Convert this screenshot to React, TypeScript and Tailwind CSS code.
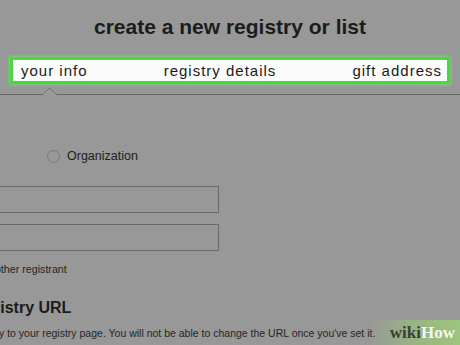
const font = { fontFamily: '"Liberation Sans", Arial, sans-serif' };

function Caret(): JSX.Element {
  return (
    <svg
      width="16"
      height="9"
      viewBox="0 0 16 9"
      className="absolute left-[42px] top-[-7px]"
    >
      <polyline points="0.5,8 7.5,1 14.5,8" fill="#989898" stroke="#6e6e6e" strokeWidth="1" />
      <polyline points="2,8 7.5,2.5 13,8" fill="none" stroke="#a9a9a9" strokeWidth="0.8" />
    </svg>
  );
}

export default function App(): JSX.Element {
  return (
    <div
      className="relative h-[345px] w-[460px] overflow-hidden bg-[#989898] text-[#1e1e1e]"
      style={font}
    >
      <h1 className="pt-[15px] text-center text-[21px] font-bold leading-[24px] text-[#1c1c1c]">
        create a new registry or list
      </h1>

      {/* step tabs, highlighted */}
      <div className="mx-[10px] mt-[18px] flex h-[27px] items-center justify-between border-[3px] border-[#42dd3c] bg-[#fbfbfb] pl-[8px] pr-[5px] text-[15px] leading-none tracking-[1px] text-[#1a1a1a] shadow-[0_0_3px_1px_rgba(120,240,110,0.6)]">
        <span>your info</span>
        <span>registry details</span>
        <span>gift address</span>
      </div>

      <div className="relative mt-[10px] h-px bg-[#666666]">
        <Caret />
      </div>

      <div className="mt-[54px] flex h-[15px] items-center gap-[7px] pl-[47px]">
        <span className="h-[13px] w-[13px] rounded-full border border-[#7a7a7a]" />
        <span className="text-[12.5px] leading-none text-[#1f1f1f]">Organization</span>
      </div>

      <div className="-ml-[10px] mt-[22px] h-[27px] w-[229px] border border-[#6a6a6a]" />
      <div className="-ml-[10px] mt-[11px] h-[27px] w-[229px] border border-[#6a6a6a]" />

      <p className="-ml-[17px] mt-[11px] whitespace-nowrap text-[10.7px] leading-[14px] text-[#262626]">
        another registrant
      </p>

      <h2 className="-ml-[30px] mt-[22px] whitespace-nowrap text-[16px] font-bold leading-[20px] text-[#1c1c1c]">
        Registry URL
      </h2>

      <p className="-ml-[29px] mt-[8px] whitespace-nowrap text-[10.5px] leading-[14px] text-[#262626]">
        directly to your registry page. You will not be able to change the URL once you've set it.
      </p>

      {/* watermark */}
      <div className="absolute bottom-0 right-0 flex h-[25px] w-[92px] items-center justify-end rounded-tl-[12px] bg-gradient-to-r from-[#98989800] via-[#98b482] to-[#9cc57c] pr-[5px]">
        <span
          className="text-[17px] font-bold leading-none"
          style={{ fontFamily: '"Liberation Serif", "DejaVu Serif", serif' }}
        >
          <span className="text-[#3a3f35]">wiki</span>
          <span className="text-[#f4f6f0]">How</span>
        </span>
      </div>
    </div>
  );
}
